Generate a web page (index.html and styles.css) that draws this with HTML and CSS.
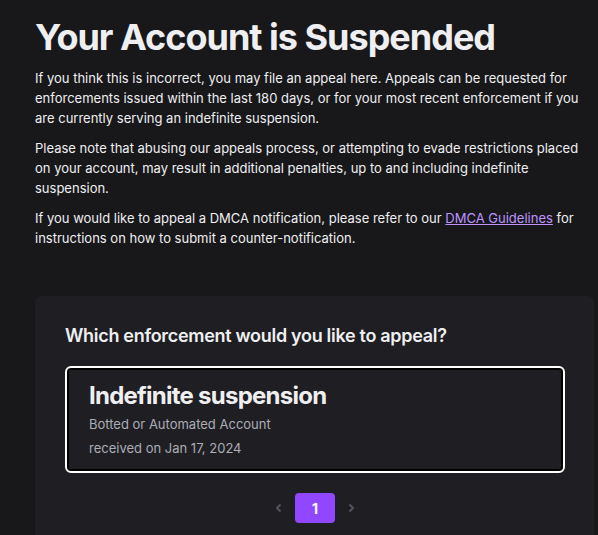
FILE: index.html
```html
<!DOCTYPE html>
<html lang="en">
<head>
<meta charset="utf-8">
<link rel="stylesheet" href="styles.css">
</head>
<body>
<main class="page">
  <h1 class="title">Your Account is Suspended</h1>
  <p class="text">If you think this is incorrect, you may file an appeal here. Appeals can be requested for enforcements issued within the last 180 days, or for your most recent enforcement if you are currently serving an indefinite suspension.</p>
  <p class="text">Please note that abusing our appeals process, or attempting to evade restrictions placed on your account, may result in additional penalties, up to and including indefinite suspension.</p>
  <p class="text">If you would like to appeal a DMCA notification, please refer to our <a class="link" href="#">DMCA Guidelines</a> for instructions on how to submit a counter-notification.</p>

  <section class="panel">
    <h2 class="question">Which enforcement would you like to appeal?</h2>
    <div class="card">
      <div class="card-title">Indefinite suspension</div>
      <div class="card-meta">Botted or Automated Account</div>
      <div class="card-meta">received on Jan 17, 2024</div>
    </div>
    <nav class="pager">
      <span class="chev">
        <svg width="8" height="10" viewBox="0 0 8 10"><path d="M5.5 1.5 L2 5 L5.5 8.5" fill="none" stroke="currentColor" stroke-width="2"/></svg>
      </span>
      <span class="page-btn">1</span>
      <span class="chev">
        <svg width="8" height="10" viewBox="0 0 8 10"><path d="M2.5 1.5 L6 5 L2.5 8.5" fill="none" stroke="currentColor" stroke-width="2"/></svg>
      </span>
    </nav>
  </section>
</main>
</body>
</html>
```
FILE: styles.css
```css
html, body {
  margin: 0;
  padding: 0;
  background: #18181b;
  overflow: hidden;
}
body {
  font-family: Inter, "Noto Sans", sans-serif;
  color: #efeff1;
}
.page {
  padding: 14px 0 0 35px;
}
.title {
  margin: 0 0 8px 0;
  font-size: 36px;
  line-height: 46px;
  font-weight: 700;
  letter-spacing: -1px;
}
.text {
  margin: 0 0 10px 0;
  width: 550px;
  font-size: 13px;
  line-height: 20px;
}
.link {
  color: #bf94ff;
  text-decoration: underline;
}
.panel {
  box-sizing: border-box;
  margin-top: 48px;
  background: #1f1f23;
  border-radius: 6px;
  padding: 28px 0 30px 30px;
  width: 559px;
}
.question {
  margin: 0 0 18px 0;
  font-size: 18px;
  line-height: 24px;
  font-weight: 600;
  letter-spacing: -0.3px;
}
.card {
  box-sizing: border-box;
  width: 500px;
  border: 2px solid #fff;
  box-shadow: inset 0 0 0 2px #000;
  border-radius: 6px;
  padding: 12px 22px 11px 22px;
  background: #1f1f23;
}
.card-title {
  font-size: 24px;
  line-height: 32px;
  font-weight: 700;
  letter-spacing: -0.75px;
}
.card-meta {
  font-size: 13px;
  line-height: 24px;
  color: #adadb8;
}
.pager {
  width: 500px;
  display: flex;
  justify-content: center;
  align-items: center;
  gap: 6px;
  margin-top: 20px;
}
.chev {
  width: 20px;
  height: 30px;
  display: flex;
  align-items: center;
  justify-content: center;
  color: #53535f;
}
.page-btn {
  width: 40px;
  height: 30px;
  border-radius: 4px;
  background: #9147ff;
  color: #fff;
  font-weight: 700;
  font-size: 14px;
  display: flex;
  align-items: center;
  justify-content: center;
}
```
